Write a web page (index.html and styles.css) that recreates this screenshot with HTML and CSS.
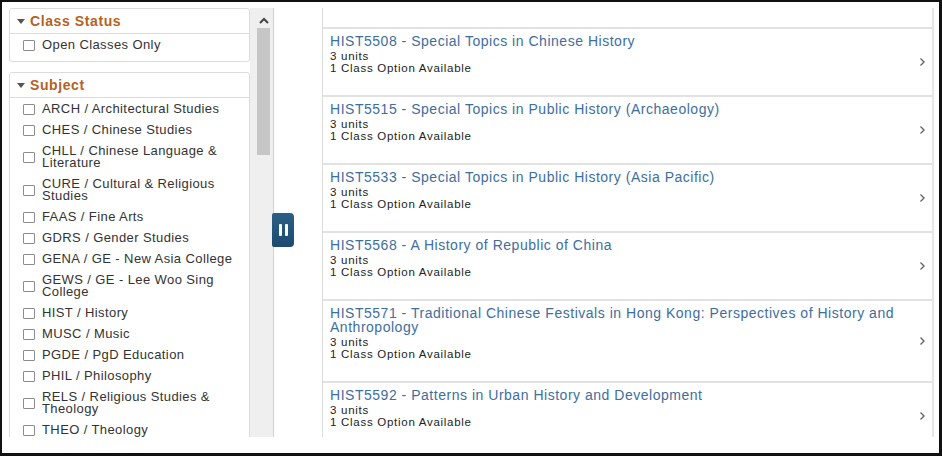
FILE: index.html
```html
<!DOCTYPE html>
<html lang="en">
<head>
<meta charset="UTF-8">
<title>Class Search Results</title>
<link rel="stylesheet" href="styles.css">
</head>
<body>
<div class="frame">
    <div class="filters">
        <div class="group">
            <div class="group-head"><span class="caret"></span>Class Status</div>
            <div class="opts">
                <div class="opt"><span class="box"></span><span class="label">Open Classes Only</span></div>
            </div>
        </div>
        <div class="group">
            <div class="group-head"><span class="caret"></span>Subject</div>
            <div class="opts">
                <div class="opt"><span class="box"></span><span class="label">ARCH / Architectural Studies</span></div>
                <div class="opt"><span class="box"></span><span class="label">CHES / Chinese Studies</span></div>
                <div class="opt"><span class="box"></span><span class="label">CHLL / Chinese Language &amp; Literature</span></div>
                <div class="opt"><span class="box"></span><span class="label">CURE / Cultural &amp; Religious Studies</span></div>
                <div class="opt"><span class="box"></span><span class="label">FAAS / Fine Arts</span></div>
                <div class="opt"><span class="box"></span><span class="label">GDRS / Gender Studies</span></div>
                <div class="opt"><span class="box"></span><span class="label">GENA / GE - New Asia College</span></div>
                <div class="opt"><span class="box"></span><span class="label">GEWS / GE - Lee Woo Sing College</span></div>
                <div class="opt"><span class="box"></span><span class="label">HIST / History</span></div>
                <div class="opt"><span class="box"></span><span class="label">MUSC / Music</span></div>
                <div class="opt"><span class="box"></span><span class="label">PGDE / PgD Education</span></div>
                <div class="opt"><span class="box"></span><span class="label">PHIL / Philosophy</span></div>
                <div class="opt"><span class="box"></span><span class="label">RELS / Religious Studies &amp; Theology</span></div>
                <div class="opt"><span class="box"></span><span class="label">THEO / Theology</span></div>
            </div>
        </div>
    </div>

    <div class="scroll">
        <svg class="up" width="10" height="7" viewBox="0 0 10 7"><polyline points="1,6 5,2 9,6" fill="none" stroke="#444" stroke-width="2"/></svg>
        <div class="thumb"></div>
    </div>

    <div class="gutter">
        <div class="pause"><span></span><span></span></div>
    </div>

    <div class="results">
        <div class="results-top"></div>
        <div class="row">
            <div class="info">
                <div class="title">HIST5508 - Special Topics in Chinese History</div>
                <div class="meta">3 units<br>1 Class Option Available</div>
            </div>
            <svg class="chev" width="7" height="10" viewBox="0 0 7 10"><polyline points="1.5,1.5 5,5 1.5,8.5" fill="none" stroke="#666" stroke-width="1.4"/></svg>
        </div>
        <div class="row">
            <div class="info">
                <div class="title">HIST5515 - Special Topics in Public History (Archaeology)</div>
                <div class="meta">3 units<br>1 Class Option Available</div>
            </div>
            <svg class="chev" width="7" height="10" viewBox="0 0 7 10"><polyline points="1.5,1.5 5,5 1.5,8.5" fill="none" stroke="#666" stroke-width="1.4"/></svg>
        </div>
        <div class="row">
            <div class="info">
                <div class="title">HIST5533 - Special Topics in Public History (Asia Pacific)</div>
                <div class="meta">3 units<br>1 Class Option Available</div>
            </div>
            <svg class="chev" width="7" height="10" viewBox="0 0 7 10"><polyline points="1.5,1.5 5,5 1.5,8.5" fill="none" stroke="#666" stroke-width="1.4"/></svg>
        </div>
        <div class="row">
            <div class="info">
                <div class="title">HIST5568 - A History of Republic of China</div>
                <div class="meta">3 units<br>1 Class Option Available</div>
            </div>
            <svg class="chev" width="7" height="10" viewBox="0 0 7 10"><polyline points="1.5,1.5 5,5 1.5,8.5" fill="none" stroke="#666" stroke-width="1.4"/></svg>
        </div>
        <div class="row">
            <div class="info">
                <div class="title">HIST5571 - Traditional Chinese Festivals in Hong Kong: Perspectives of History and Anthropology</div>
                <div class="meta">3 units<br>1 Class Option Available</div>
            </div>
            <svg class="chev" width="7" height="10" viewBox="0 0 7 10"><polyline points="1.5,1.5 5,5 1.5,8.5" fill="none" stroke="#666" stroke-width="1.4"/></svg>
        </div>
        <div class="row">
            <div class="info">
                <div class="title">HIST5592 - Patterns in Urban History and Development</div>
                <div class="meta">3 units<br>1 Class Option Available</div>
            </div>
            <svg class="chev" width="7" height="10" viewBox="0 0 7 10"><polyline points="1.5,1.5 5,5 1.5,8.5" fill="none" stroke="#666" stroke-width="1.4"/></svg>
        </div>
    </div>
</div>
</body>
</html>
```

FILE: styles.css
```css
body {
    margin: 0;
    padding: 0;
    background: #fff;
    font-family: "Liberation Sans", Arial, sans-serif;
}

.frame {
    width: 942px;
    height: 456px;
    box-sizing: border-box;
    border-style: solid;
    border-color: #111;
    border-width: 2px 3px 3px 2px;
    padding: 6px 5px 16px 6px;
    display: flex;
    align-items: stretch;
}

/* left filter column */
.filters {
    width: 241px;
    height: 429px;
    overflow: hidden;
    flex-shrink: 0;
    padding-left: 1px;
}
.group {
    border: 1px solid #dcdcdc;
    border-radius: 3px;
    margin-bottom: 10px;
}
.group-head {
    height: 24px;
    display: flex;
    align-items: center;
    padding-left: 7px;
    border-bottom: 1px solid #dcdcdc;
    color: #b5621f;
    font-weight: bold;
    font-size: 14px;
    letter-spacing: 0.6px;
}
.caret {
    width: 0;
    height: 0;
    border-left: 4px solid transparent;
    border-right: 4px solid transparent;
    border-top: 5px solid #555;
    margin-right: 5px;
}
.opts {
    padding: 1px 0 5px;
}
.opt {
    display: flex;
    align-items: center;
    padding: 4px 8px 5px 13px;
}
.box {
    width: 10px;
    height: 9px;
    border: 1px solid #8c8c8c;
    border-radius: 1px;
    background: #fff;
    flex-shrink: 0;
    margin-right: 7px;
}
.label {
    font-size: 13px;
    line-height: 12px;
    letter-spacing: 0.4px;
    color: #333;
}

/* fake scrollbar */
.scroll {
    width: 23px;
    height: 429px;
    flex-shrink: 0;
    background: #efefef;
    border-right: 1px solid #d2d2d2;
    display: flex;
    flex-direction: column;
}
.up {
    margin: 9px 0 0 9px;
}
.thumb {
    width: 13px;
    height: 127px;
    margin: 4px 0 0 7px;
    background: #c6c6c6;
}

.gutter {
    width: 48px;
    flex-shrink: 0;
}
.pause {
    width: 22px;
    height: 34px;
    margin: 205px 0 0 -2px;
    background: linear-gradient(#2d5f86, #1b4a6f);
    border-radius: 2px 4px 4px 2px;
    display: flex;
    justify-content: center;
    align-items: center;
    gap: 3px;
}
.pause span {
    width: 3px;
    height: 12px;
    background: #fff;
    border-radius: 1px;
}

/* result list */
.results {
    width: 609px;
    height: 429px;
    overflow: hidden;
    flex-shrink: 0;
    border-left: 1px solid #dcdcdc;
    border-right: 2px solid #e6e6e6;
}
.results-top {
    height: 19px;
}
.row {
    display: flex;
    align-items: center;
    border-top: 2px solid #e2e2e2;
    padding: 5px 6px 21px 7px;
}
.info {
    flex: 1;
    align-self: flex-start;
}
.title {
    color: #3e6e9e;
    font-size: 14px;
    line-height: 14px;
    letter-spacing: 0.52px;
    padding-right: 22px;
}
.meta {
    margin-top: 2px;
    font-size: 11.5px;
    line-height: 12px;
    letter-spacing: 0.72px;
    color: #222;
}
.chev {
    flex-shrink: 0;
    margin-top: 16px;
}
```
